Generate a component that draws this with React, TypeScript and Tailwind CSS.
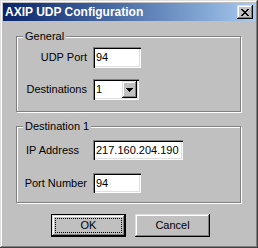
import React from "react";

const sunken =
  "bg-white shadow-[inset_1px_1px_0_#808080,inset_2px_2px_0_#000,inset_-1px_-1px_0_#fff,inset_-2px_-2px_0_#dfdfdf]";
const raised =
  "bg-[#c0c0c0] shadow-[inset_-1px_-1px_0_#000,inset_1px_1px_0_#dfdfdf,inset_-2px_-2px_0_#808080,inset_2px_2px_0_#fff]";

function Group({
  title,
  className,
  children,
}: {
  title: string;
  className: string;
  children: React.ReactNode;
}) {
  return (
    <div
      className={`relative w-[225px] border border-[#808080] shadow-[inset_1px_1px_0_#fff,1px_1px_0_#fff] ${className}`}
    >
      <span className="absolute left-[6px] top-[-7px] bg-[#c0c0c0] px-[2px] leading-[13px]">
        {title}
      </span>
      {children}
    </div>
  );
}

export default function App() {
  return (
    <div className="w-[258px] h-[248px] bg-[#c0c0c0] p-[3px] flex flex-col text-[11px] text-black font-['Liberation_Sans',Arial,sans-serif] shadow-[inset_-1px_-1px_0_#404040,inset_1px_1px_0_#dfdfdf,inset_-2px_-2px_0_#808080,inset_2px_2px_0_#fff]">
      <div className="h-[18px] flex items-center justify-between bg-gradient-to-r from-[#0a246a] to-[#a6caf0] pl-[2px] pr-[2px]">
        <span className="text-white font-bold text-[12px] leading-[14px]">
          AXIP UDP Configuration
        </span>
        <div className={`w-[16px] h-[14px] flex items-center justify-center ${raised}`}>
          <svg width="8" height="7" viewBox="0 0 8 7" shapeRendering="crispEdges">
            <path
              d="M0 0h2v1h-2zM6 0h2v1h-2zM1 1h2v1h-2zM5 1h2v1h-2zM2 2h4v1h-4zM3 3h2v1h-2zM2 4h4v1h-4zM1 5h2v1h-2zM5 5h2v1h-2zM0 6h2v1h-2zM6 6h2v1h-2z"
              fill="#000"
            />
          </svg>
        </div>
      </div>
      <div className="flex flex-col pl-[13px]">
        <Group title="General" className="mt-[15px] h-[76px] pt-[10px]">
          <div className="flex items-center h-[21px]">
            <span className="w-[70px] mr-[6px] text-right">UDP Port</span>
            <div className={`w-[48px] h-[21px] flex items-center px-[3px] ${sunken}`}>94</div>
          </div>
          <div className="flex items-center h-[21px] mt-[11px]">
            <span className="w-[70px] mr-[6px] text-right">Destinations</span>
            <div className={`w-[46px] h-[21px] flex items-center justify-between pl-[3px] pr-[2px] ${sunken}`}>
              <span>1</span>
              <div className={`w-[15px] h-[17px] flex items-center justify-center ${raised}`}>
                <svg width="7" height="4" viewBox="0 0 7 4" shapeRendering="crispEdges">
                  <path d="M0 0h7v1h-7zM1 1h5v1h-5zM2 2h3v1h-3zM3 3h1v1h-1z" fill="#000" />
                </svg>
              </div>
            </div>
          </div>
        </Group>
        <Group title="Destination 1" className="mt-[14px] h-[77px] pt-[13px]">
          <div className="flex items-center h-[20px]">
            <span className="w-[76px] pl-[9px] text-left">IP Address</span>
            <div className={`w-[90px] h-[20px] flex items-center px-[3px] ${sunken}`}>
              217.160.204.190
            </div>
          </div>
          <div className="flex items-center h-[20px] mt-[13px]">
            <span className="w-[70px] mr-[6px] text-right">Port Number</span>
            <div className={`w-[48px] h-[20px] flex items-center px-[3px] ${sunken}`}>94</div>
          </div>
        </Group>
        <div className="flex mt-[11px] ml-[35px] gap-[9px]">
          <div className="w-[75px] h-[23px] border border-black">
            <div className={`w-full h-full p-[3px] ${raised}`}>
              <div className="w-full h-full border border-dotted border-black flex items-center justify-center">
                OK
              </div>
            </div>
          </div>
          <div className={`w-[75px] h-[23px] flex items-center justify-center ${raised}`}>
            Cancel
          </div>
        </div>
      </div>
    </div>
  );
}
